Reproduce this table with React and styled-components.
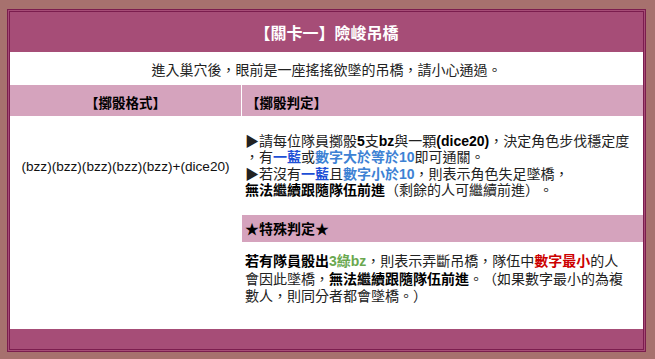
import React from 'react';
import styled, { createGlobalStyle } from 'styled-components';

const GlobalStyle = createGlobalStyle`
  html, body {
    margin: 0;
    padding: 0;
    background: #a7716e;
    overflow: hidden;
  }
  body {
    font-family: "Liberation Sans", "Noto Sans CJK TC", sans-serif;
    text-spacing-trim: space-all;
  }
`;

let Page = styled.div`
  padding: 9px 0 0 7px;
`;

let Board = styled.div`
  width: 639px;
  height: 343px;
  box-sizing: border-box;
  border: 3px double #7b1d4e;
  background: #a64d77;
  display: flex;
  flex-direction: column;
`;

let Title = styled.div`
  height: 40px;
  display: flex;
  align-items: center;
  justify-content: center;
  color: #fff;
  font-size: 16px;
  font-weight: bold;
`;

let Intro = styled.div`
  height: 33px;
  display: flex;
  align-items: center;
  justify-content: center;
  background: #fff;
  color: #222;
  font-size: 14px;
`;

let Row = styled.div`
  display: grid;
  grid-template-columns: 231px 1fr;
  column-gap: 1px;
  background: #fff;
`;

let HeadCell = styled.div`
  height: 31px;
  display: flex;
  align-items: center;
  justify-content: ${p => (p.center ? 'center' : 'flex-start')};
  padding: 3px ${p => (p.center ? '0' : '4px')} 0;
  box-sizing: border-box;
  background: #d5a3bd;
  color: #000;
  font-size: 13.5px;
  font-weight: bold;
`;

let Body = styled(Row)`
  height: 213px;
  grid-template-rows: 99px 27px 1fr;
`;

let FormatCell = styled.div`
  grid-row: 1;
  grid-column: 1;
  display: flex;
  align-items: center;
  justify-content: center;
  padding-top: 2px;
  color: #111;
  font-size: 13.6px;
`;

let RuleCell = styled.div`
  grid-column: 2;
  display: flex;
  flex-direction: column;
  justify-content: ${p => (p.top ? 'flex-start' : 'center')};
  padding: ${p => (p.top ? '11px 3px 0' : '0 3px')};
  background: ${p => (p.shade ? '#d5a3bd' : '#fff')};
  color: #222;
  font-size: 14px;
  line-height: ${p => (p.top ? '17.5px' : '16.5px')};
  white-space: nowrap;
`;

let SubTitle = styled.span`
  color: #000;
  font-weight: bold;
  padding-top: 2px;
`;

let B = styled.b`
  color: ${p => p.color || '#000'};
`;

let Footer = styled.div`
  height: 20px;
`;

export default function App() {
  return (
    <Page>
      <GlobalStyle />
      <Board>
        <Title>【關卡一】險峻吊橋</Title>
        <Intro>進入巢穴後，眼前是一座搖搖欲墜的吊橋，請小心通過。</Intro>
        <Row>
          <HeadCell center>【擲骰格式】</HeadCell>
          <HeadCell>【擲骰判定】</HeadCell>
        </Row>
        <Body>
          <FormatCell>(bzz)(bzz)(bzz)(bzz)(bzz)+(dice20)</FormatCell>
          <RuleCell>
            <div>▶請每位隊員擲骰<B>5</B>支<B>bz</B>與一顆<B>(dice20)</B>，決定角色步伐穩定度</div>
            <div>，有<B color="#1d4fd6">一藍</B>或<B color="#3d82d4">數字大於等於10</B>即可通關。</div>
            <div>▶若沒有<B color="#1d4fd6">一藍</B>且<B color="#3d82d4">數字小於10</B>，則表示角色失足墜橋，</div>
            <div><B>無法繼續跟隨隊伍前進</B>（剩餘的人可繼續前進）。</div>
          </RuleCell>
          <RuleCell shade>
            <SubTitle>★特殊判定★</SubTitle>
          </RuleCell>
          <RuleCell top>
            <div><B>若有隊員骰出</B><B color="#6aa84f">3綠bz</B>，則表示弄斷吊橋，隊伍中<B color="#cc0000">數字最小</B>的人</div>
            <div>會因此墜橋，<B>無法繼續跟隨隊伍前進</B>。（如果數字最小的為複</div>
            <div>數人，則同分者都會墜橋。）</div>
          </RuleCell>
        </Body>
        <Footer />
      </Board>
    </Page>
  );
}
